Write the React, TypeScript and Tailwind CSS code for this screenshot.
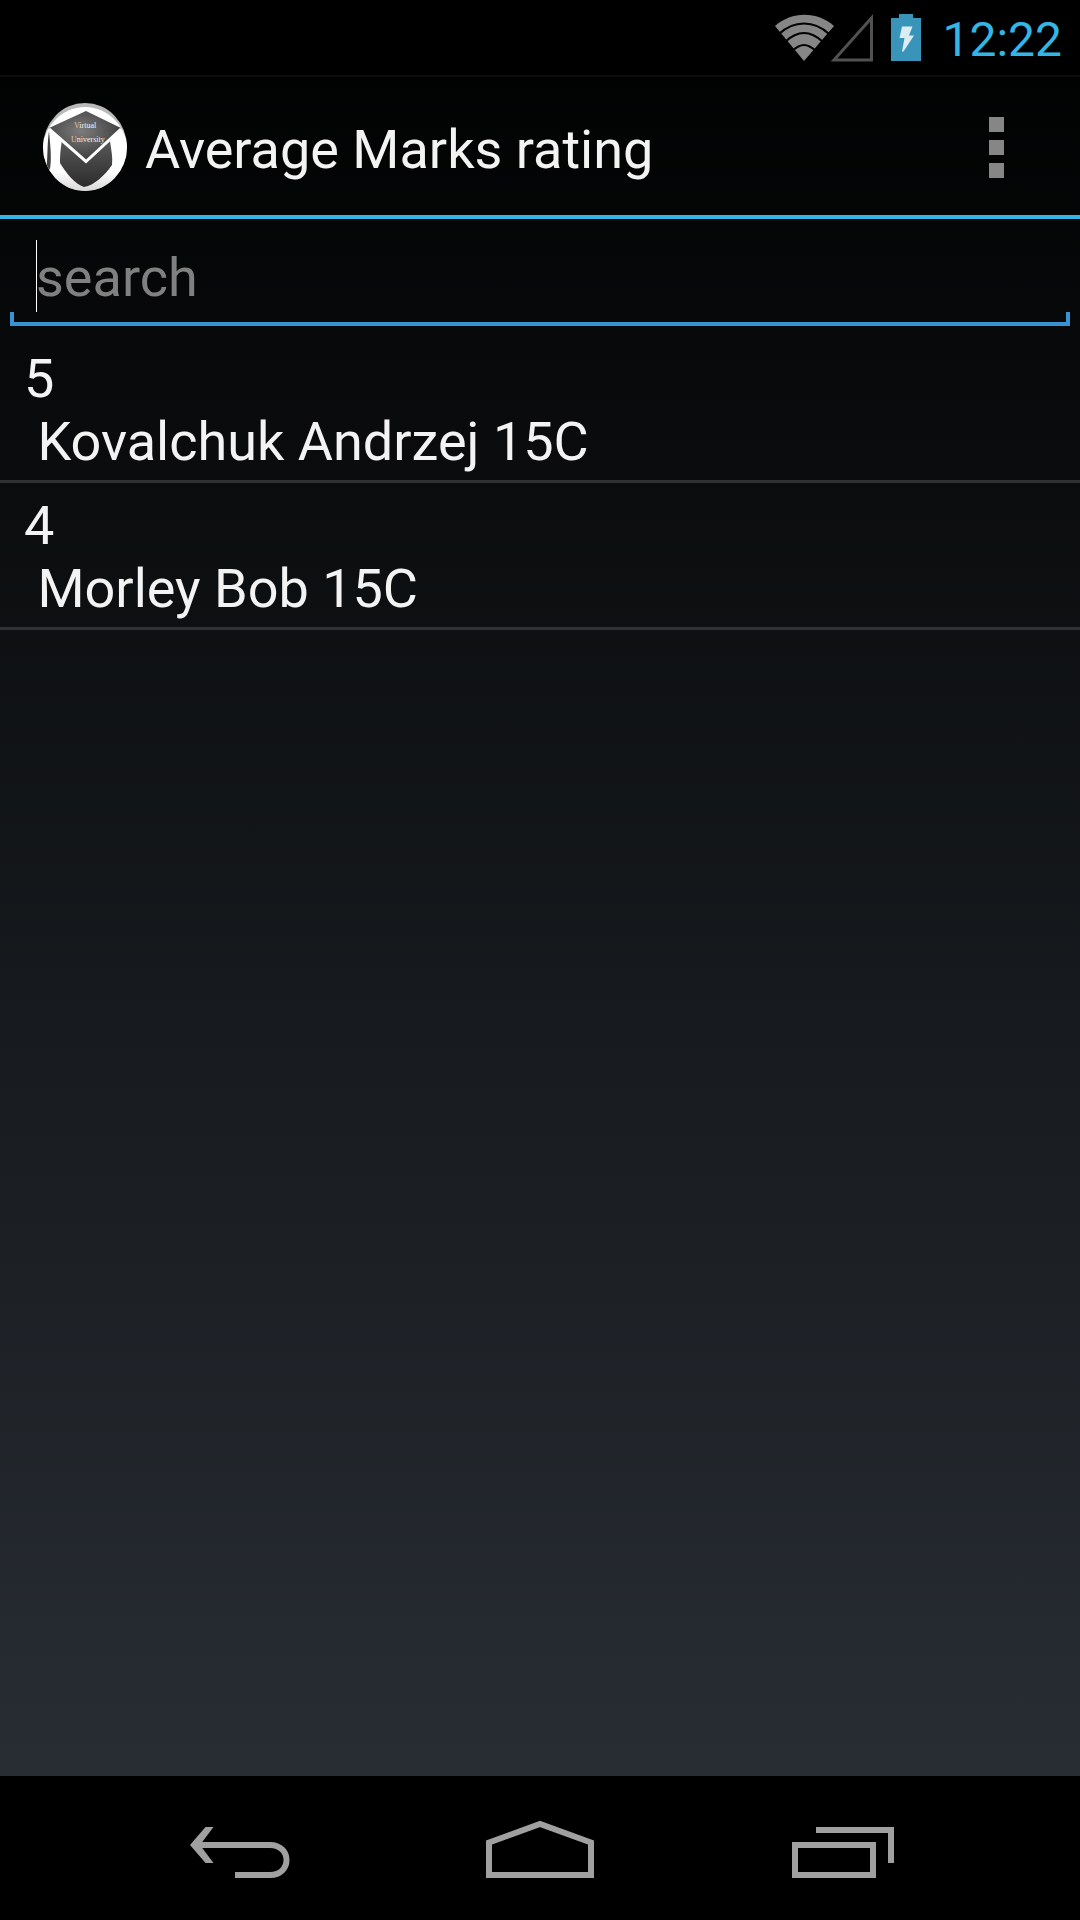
import React from "react";

const students = [
  { mark: "5", name: "Kovalchuk Andrzej 15C" },
  { mark: "4", name: "Morley Bob 15C" },
];

function WifiIcon() {
  return (
    <svg className="h-[50px] w-[60px]" viewBox="0 0 60 50" aria-hidden="true">
      <path d="M1 13C18 -2 43 -2 60 13L30 48Z" fill="#868686" />
      <g fill="none" stroke="#000" strokeWidth="2.2">
        <path d="M5 21C20 7 40 7 55 21" />
        <path d="M11 29C24 17 36 17 49 29" />
        <path d="M18 38C27 30 33 30 42 38" />
      </g>
    </svg>
  );
}

function SignalIcon() {
  return (
    <svg className="h-[50px] w-10" viewBox="4 0 40 50" overflow="visible" aria-hidden="true">
      <path d="M4 47L41.500 5V47Z" fill="none" stroke="#515151" strokeWidth="3" />
    </svg>
  );
}

function BatteryIcon() {
  return (
    <svg className="h-12 w-[30px]" viewBox="0 0 30 48" aria-hidden="true">
      <path d="M8 0H22V4H30V47H0V4H8Z" fill="#3994b9" />
      <path d="M11 12.500H21.500L18 21.500H23L12.500 37.500H11L13.500 24H8.500Z" fill="#dcecf3" />
    </svg>
  );
}

function AppLogo() {
  return (
    <svg className="h-[88px] w-[84px] shrink-0" viewBox="0 0 84 88" role="img" aria-label="Virtual University">
      <defs>
        <clipPath id="disc">
          <ellipse cx="42" cy="44" rx="42" ry="44" />
        </clipPath>
        <radialGradient id="cap" cx="0.45" cy="0.4" r="0.6">
          <stop offset="0" stopColor="#7c7c7c" />
          <stop offset="1" stopColor="#3c3c3c" />
        </radialGradient>
        <linearGradient id="base" x1="0" y1="0" x2="0" y2="1">
          <stop offset="0" stopColor="#5a5a5a" />
          <stop offset="1" stopColor="#2c2c2c" />
        </linearGradient>
        <linearGradient id="shade" x1="0" y1="0" x2="0" y2="1">
          <stop offset="0.7" stopColor="#fff" />
          <stop offset="1" stopColor="#c8c8c8" />
        </linearGradient>
      </defs>
      <g clipPath="url(#disc)">
        <rect width="84" height="88" fill="#b9b9b9" />
        <ellipse cx="42" cy="50" rx="43" ry="46" fill="url(#shade)" />
        <path d="M6 28C7 40 9 54 7 66L3 68C5 56 4 40 6 28Z" fill="#3f3f3f" />
        <path d="M19 36L43 60L67 38C68 46 70 54 69 62C62 72 52 82 41 84C32 81 23 70 17 60C17 50 18 44 19 36Z" fill="url(#base)" />
        <path d="M6 25L43 8L78 25L43 58Z" fill="url(#cap)" />
        <path d="M6 26L43 58.500L78 26" fill="none" stroke="#fff" strokeWidth="3" />
        <g fill="#f0f0f0" fontFamily="Liberation Serif, serif" fontSize="8">
          <text x="31" y="25"><tspan fill="#e5c19c">V</tspan>irtual</text>
          <text x="28" y="39"><tspan fill="#e5c19c">U</tspan>niversity</text>
        </g>
      </g>
    </svg>
  );
}

export default function App() {
  return (
    <div className="flex min-h-screen flex-col bg-black font-[Roboto,sans-serif] text-[54px] leading-[63px] text-[#f3f3f3]">
      <div className="flex h-[75px] items-center justify-end bg-black pr-[18px]">
        <WifiIcon />
        <SignalIcon />
        <div className="ml-[17px]">
          <BatteryIcon />
        </div>
        <time className="ml-[21px] pt-1 text-5xl text-[#33b5e5]">12:22</time>
      </div>

      <div className="flex grow flex-col bg-linear-to-b/srgb from-[#010202] to-[#282d34]">
        <header className="flex h-36 items-center border-t-2 border-b-4 border-t-[#0d0d0d] border-b-[#33b5e5] pt-0.5 pl-[43px]">
          <AppLogo />
          <h1 className="grow pt-1 pl-[18px]">Average Marks rating</h1>
          <button type="button" aria-label="More options" className="flex h-full w-[168px] flex-col items-center justify-center gap-2">
            <span className="size-[15px] bg-[#868686]" />
            <span className="size-[15px] bg-[#868686]" />
            <span className="size-[15px] bg-[#868686]" />
          </button>
        </header>

        <main>
          <div className="relative mx-2.5 mb-2.5 border-b-4 border-[#3793d1] pt-[21px] pb-2.5">
            <input
              type="text"
              aria-label="search"
              placeholder="search"
              className="block h-[72px] w-full bg-transparent px-[26px] pt-0.5 outline-none placeholder:text-[#808080]"
            />
            <span className="absolute top-[21px] left-[26px] h-[72px] w-px bg-white" />
            <span className="absolute bottom-0 left-0 h-2.5 w-1 bg-[#3793d1]" />
            <span className="absolute right-0 bottom-0 h-2.5 w-1 bg-[#3793d1]" />
          </div>
          <ul>
            {students.map((s) => (
              <li key={s.name} className="border-b-3 border-[#303133] px-6 pt-[11px] pb-[7px]">
                <p>{s.mark}</p>
                <p className="whitespace-pre"> {s.name}</p>
              </li>
            ))}
          </ul>
        </main>
      </div>

      <nav className="flex h-36 items-center justify-center bg-black pt-2">
        <button type="button" aria-label="Back" className="flex w-[300px] justify-center">
          <svg className="h-16 w-[108px]" viewBox="0 0 108 64" fill="none" stroke="#a0a0a0" strokeWidth="6">
            <path d="M12 25H84C106 25 106 55 84 55H49" />
            <path d="M4 25L19.500 7H27.500L14 25L27.500 43H19.500Z" fill="#a0a0a0" stroke="none" />
          </svg>
        </button>
        <button type="button" aria-label="Home" className="flex w-[300px] justify-center">
          <svg className="h-16 w-[108px]" viewBox="0 0 108 64" fill="none" stroke="#a0a0a0" strokeWidth="6">
            <path d="M3 55V22.500L54 4L105 22.500V55Z" />
          </svg>
        </button>
        <button type="button" aria-label="Recent apps" className="flex w-[300px] justify-center">
          <svg className="h-16 w-[108px]" viewBox="0 0 108 64" fill="none" stroke="#a0a0a0" strokeWidth="6">
            <path d="M9 25H87V55H9ZM30 10H105V43" />
          </svg>
        </button>
      </nav>
    </div>
  );
}
